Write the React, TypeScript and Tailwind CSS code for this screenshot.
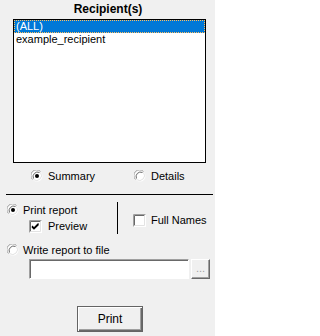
import React from "react";

const Radio = ({ checked }: { checked?: boolean }) => (
  <svg width="12" height="12" viewBox="0 0 12 12" className="shrink-0">
    <circle cx="6" cy="6" r="5.5" fill="#ffffff" />
    <path d="M1.5 9.5 A5.5 5.5 0 0 1 9.5 1.5" fill="none" stroke="#a0a0a0" />
    <path d="M2.5 8.5 A4.5 4.5 0 0 1 8.5 2.5" fill="none" stroke="#696969" />
    <path d="M9.5 2.5 A5 5 0 0 1 2.5 9.5" fill="none" stroke="#e3e3e3" />
    {checked && <circle cx="6" cy="6" r="2" fill="#000000" />}
  </svg>
);

const Check = ({ checked }: { checked?: boolean }) => (
  <svg width="13" height="13" viewBox="0 0 13 13" className="shrink-0">
    <rect x="0" y="0" width="13" height="13" fill="#ffffff" />
    <path d="M0.5 12.5 V0.5 H12.5" fill="none" stroke="#a0a0a0" />
    <path d="M1.5 11.5 V1.5 H11.5" fill="none" stroke="#696969" />
    <path d="M1.5 11.5 H11.5 V1.5" fill="none" stroke="#e3e3e3" />
    {checked && (
      <path d="M3 6 L5 8 L9.5 3.5 M3 7 L5 9 L9.5 4.5" fill="none" stroke="#000000" strokeWidth="1.2" />
    )}
  </svg>
);

export default function App() {
  return (
    <div className="w-[215px] h-[336px] bg-[#f0f0f0] text-black text-[11px] leading-[13px] font-['Liberation_Sans',Arial,sans-serif] flex flex-col">
      <div className="h-[19px] flex items-center justify-center font-bold text-[12px] pl-[1px]">
        Recipient(s)
      </div>

      <div className="ml-[13px] w-[193px] h-[144px] border border-black bg-white flex flex-col">
        <div className="h-[13px] bg-[#0078d7] text-white pl-[2px] outline outline-1 outline-dotted outline-offset-[-1px] outline-[#ffbf60]">
          (ALL)
        </div>
        <div className="h-[13px] pl-[2px]">example_recipient</div>
      </div>

      <div className="mt-[7px] h-[12px] flex items-center">
        <div className="ml-[31px] flex items-center gap-[5px] w-[103px]">
          <Radio checked />
          <span>Summary</span>
        </div>
        <div className="flex items-center gap-[5px]">
          <Radio />
          <span>Details</span>
        </div>
      </div>

      <div className="mt-[12px] ml-[6px] w-[207px] h-px bg-black" />

      <div className="mt-[7px] h-[33px] flex">
        <div className="ml-[7px] w-[110px] flex flex-col pt-[2px]">
          <div className="h-[12px] flex items-center gap-[4px]">
            <Radio checked />
            <span>Print report</span>
          </div>
          <div className="mt-[4px] ml-[22px] h-[13px] flex items-center gap-[6px]">
            <Check checked />
            <span>Preview</span>
          </div>
        </div>
        <div className="w-px h-[32px] bg-black" />
        <div className="ml-[15px] mt-[12px] h-[13px] flex items-center gap-[5px]">
          <Check />
          <span>Full Names</span>
        </div>
      </div>

      <div className="mt-[9px] ml-[7px] h-[12px] flex items-center gap-[4px]">
        <Radio />
        <span>Write report to file</span>
      </div>

      <div className="mt-[3px] ml-[29px] h-[20px] flex gap-[2px]">
        <div className="w-[160px] h-[20px] bg-white border border-t-[#a0a0a0] border-l-[#a0a0a0] border-b-[#ffffff] border-r-[#ffffff] shadow-[inset_1px_1px_0_#696969]" />
        <div className="w-[19px] h-[20px] bg-[#f0f0f0] border border-t-[#ffffff] border-l-[#ffffff] border-b-[#696969] border-r-[#696969] shadow-[inset_-1px_-1px_0_#a0a0a0] flex items-center justify-center text-[#a0a0a0] pb-[1px]">
          ...
        </div>
      </div>

      <div className="mt-[27px] ml-[77px] w-[66px] h-[26px] border border-[#646464] shadow-[inset_1px_1px_0_#ffffff,inset_-1px_-1px_0_#696969,inset_-2px_-2px_0_#a0a0a0] bg-[#f0f0f0] flex items-center justify-center text-[12px]">
        Print
      </div>
    </div>
  );
}
